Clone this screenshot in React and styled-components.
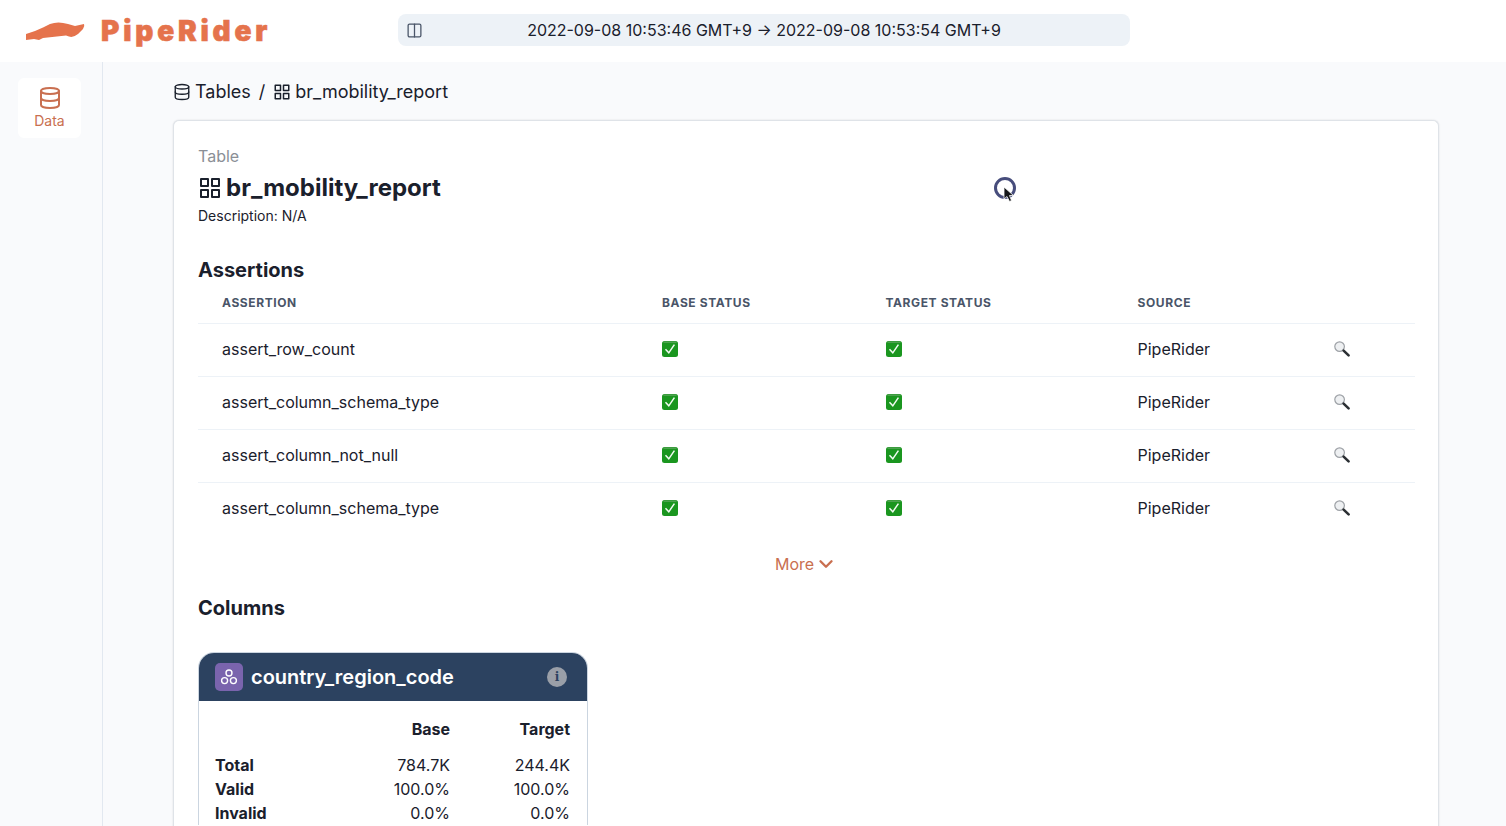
import React from 'react';
import styled, { createGlobalStyle } from 'styled-components';
import { Columns2, Database, ChevronDown } from 'lucide-react';
import { FiGrid } from 'react-icons/fi';

const GlobalStyle = createGlobalStyle`
  html, body {
    margin: 0;
    padding: 0;
    height: 826px;
    overflow: hidden;
    background: #f9fafc;
    font-family: Inter, "Liberation Sans", sans-serif;
    color: #1a202c;
  }
  * { box-sizing: border-box; }
`;

const Page = styled.div`
  height: 826px;
  display: flex;
  flex-direction: column;
  overflow: hidden;
`;

const TopBar = styled.header`
  height: 62px;
  flex: none;
  background: #ffffff;
  display: grid;
  grid-template-columns: 398px 732px;
  align-items: center;
`;

const Brand = styled.div`
  display: flex;
  align-items: center;
  padding-left: 25px;
  gap: 16px;
`;

const BrandName = styled.span`
  font-family: Inter, Lato, sans-serif;
  font-weight: 900;
  font-size: 28px;
  letter-spacing: 3.8px;
  -webkit-text-stroke: 0.6px #e5734c;
  color: #e5734c;
  line-height: 30px;
  margin-top: -1px;
`;

const RangeBar = styled.div`
  position: relative;
  height: 32px;
  margin-top: -2px;
  border-radius: 8px;
  background: #edf2f7;
  display: flex;
  align-items: center;
  justify-content: center;
  font-size: 16px;
  color: #1a202c;
`;

const ToggleIcon = styled.span`
  position: absolute;
  left: 8px;
  top: 8px;
  display: flex;
  color: #4a5568;
`;

const Body = styled.div`
  flex: 1;
  display: flex;
  min-height: 0;
`;

const Sidebar = styled.nav`
  width: 103px;
  flex: none;
  border-right: 1px solid #e2e8f0;
  padding: 16px 0 0 18px;
`;

const NavItem = styled.div`
  width: 63px;
  height: 60px;
  background: #ffffff;
  border-radius: 6px;
  display: flex;
  flex-direction: column;
  align-items: center;
  padding-top: 8px;
  color: #c96f50;
  font-size: 14px;
  line-height: 21px;
`;

const Main = styled.main`
  flex: 1;
  padding: 17px 67px 0 70px;
  min-width: 0;
`;

const Crumbs = styled.div`
  display: flex;
  align-items: center;
  height: 25px;
  font-size: 18px;
  color: #1a202c;
  margin-bottom: 16px;
`;

const CrumbIcon = styled.span`
  display: flex;
  margin-right: 4px;
`;

const CrumbSep = styled.span`
  margin: 0 8px;
`;

const Card = styled.section`
  background: #ffffff;
  border: 1px solid #dfe3e8;
  border-bottom: none;
  border-radius: 6px 6px 0 0;
  box-shadow: 0 0 2px rgba(0, 0, 0, 0.12);
  padding: 23px 24px 0;
  height: 720px;
`;

const Eyebrow = styled.div`
  font-size: 16px;
  line-height: 24px;
  color: #8b8f96;
`;

const TableTitle = styled.h1`
  margin: 4px 0 0;
  display: flex;
  align-items: center;
  gap: 4px;
  font-size: 24px;
  line-height: 32px;
  font-weight: 700;
  color: #1a202c;
`;

const Description = styled.div`
  font-size: 14px;
  line-height: 20px;
  margin-top: 2px;
`;

const SectionTitle = styled.h2`
  margin: ${(p) => p.$top}px 0 0;
  font-size: 20px;
  line-height: 24px;
  font-weight: 700;
  color: #1a202c;
`;

const AssertionTable = styled.table`
  width: 1217px;
  border-collapse: collapse;
  table-layout: fixed;
`;

const HeadCell = styled.th`
  height: 41px;
  padding: 0 0 0 24px;
  text-align: left;
  font-size: 12px;
  font-weight: 700;
  letter-spacing: 0.6px;
  color: #4a5568;
  border-bottom: 1px solid #edf2f7;
`;

const Cell = styled.td`
  height: 53px;
  padding: 0 0 2px 24px;
  font-size: 16px;
  color: #1a202c;
  border-bottom: ${(p) => (p.$last ? 'none' : '1px solid #edf2f7')};
`;

const IconCell = styled.span`
  display: flex;
  align-items: center;
`;

const MoreRow = styled.div`
  display: flex;
  justify-content: center;
  align-items: center;
  height: 24px;
  margin-top: 17px;
  gap: 1px;
  font-size: 16px;
  color: #c96f50;
`;

const ColumnCard = styled.article`
  width: 390px;
  margin-top: 32px;
  border: 1px solid #cbd5e0;
  border-bottom: none;
  border-radius: 16px 16px 0 0;
  overflow: hidden;
`;

const ColumnHeader = styled.div`
  height: 48px;
  background: #2c4260;
  display: flex;
  align-items: center;
  padding: 0 20px 0 16px;
  color: #ffffff;
`;

const TypeBadge = styled.span`
  width: 28px;
  height: 28px;
  border-radius: 5px;
  background: #7a64ad;
  display: flex;
  align-items: center;
  justify-content: center;
  margin-right: 8px;
`;

const ColumnName = styled.span`
  flex: 1;
  font-size: 20px;
  font-weight: 600;
`;

const InfoDot = styled.span`
  width: 20px;
  height: 20px;
  border-radius: 50%;
  background: #9a9fa8;
  color: #2c4260;
  font-family: "DejaVu Serif", serif;
  font-weight: 700;
  font-size: 12px;
  display: flex;
  align-items: center;
  justify-content: center;
`;

const Metrics = styled.div`
  background: #ffffff;
  padding: 16px 17px 0 16px;
  display: grid;
  grid-template-columns: 1fr 120px 120px;
  font-size: 16px;
  line-height: 24px;
`;

const MetricHead = styled.div`
  font-weight: 700;
  text-align: right;
`;

const Spacer = styled.div`
  grid-column: 1 / -1;
  height: 12px;
`;

const MetricLabel = styled.div`
  font-weight: 700;
`;

const MetricValue = styled.div`
  text-align: right;
`;

const CursorSpot = styled.div`
  position: absolute;
  left: 994px;
  top: 177px;
  width: 23px;
  height: 27px;
`;

const assertions = [
  'assert_row_count',
  'assert_column_schema_type',
  'assert_column_not_null',
  'assert_column_schema_type',
];

const metrics = [
  ['Total', '784.7K', '244.4K'],
  ['Valid', '100.0%', '100.0%'],
  ['Invalid', '0.0%', '0.0%'],
];

const CarLogo = () => (
  <svg width="60" height="20" viewBox="0 0 60 20">
    <path
      fill="#e5734c"
      d="M1 13 L10 10 L18 6.5 L25 3 Q33 0 43 3 L50 5 L59 3 Q60 5 58 8 L53 13 Q48 17 44 15.5 L41 14.5 L18 17 L14 19 L9 18 L1 19 Z"
    />
  </svg>
);

const CheckEmoji = () => (
  <svg width="16" height="16" viewBox="0 0 16 16">
    <rect width="16" height="16" rx="2.5" fill="#1a961f" />
    <rect x="1.5" y="0.6" width="13" height="1" fill="#6fa96f" />
    <path d="M3.5 8.2 L6.8 11.8 L12.4 3.6" fill="none" stroke="#f2fbf2" strokeWidth="1.5" />
  </svg>
);

const Magnifier = () => (
  <svg width="18" height="18" viewBox="0 0 18 18">
    <circle cx="6.6" cy="6.6" r="4.8" fill="#eef0f2" stroke="#9da1a6" strokeWidth="1.2" />
    <path d="M10.6 10.6 L15.6 15.4" stroke="#2b2f33" strokeWidth="2.6" strokeLinecap="round" />
  </svg>
);

const GroupIcon = () => (
  <svg width="18" height="18" viewBox="0 0 18 18" fill="none" stroke="#ffffff" strokeWidth="1.4">
    <circle cx="9" cy="5" r="3" />
    <circle cx="4.6" cy="12.6" r="3" />
    <circle cx="13.4" cy="12.6" r="3" />
  </svg>
);

const RecordingCursor = () => (
  <svg width="23" height="27" viewBox="0 0 23 27">
    <circle cx="11" cy="11" r="9.5" fill="none" stroke="#474d7c" strokeWidth="3" />
    <path d="M10 10 L10 22 L13 19.5 L15.5 24.5 L17.5 23.5 L15.5 18.5 L19.5 18.5 Z" fill="#15171a" stroke="#ffffff" strokeWidth="0.8" />
  </svg>
);

export default function App() {
  return (
    <Page>
      <GlobalStyle />
      <TopBar>
        <Brand>
          <CarLogo />
          <BrandName>PipeRider</BrandName>
        </Brand>
        <RangeBar>
          <ToggleIcon>
            <Columns2 size={17} strokeWidth={1.8} />
          </ToggleIcon>
          2022-09-08 10:53:46 GMT+9 → 2022-09-08 10:53:54 GMT+9
        </RangeBar>
      </TopBar>
      <Body>
        <Sidebar>
          <NavItem>
            <Database size={24} strokeWidth={2} />
            Data
          </NavItem>
        </Sidebar>
        <Main>
          <Crumbs>
            <CrumbIcon>
              <Database size={18} strokeWidth={1.8} />
            </CrumbIcon>
            Tables
            <CrumbSep>/</CrumbSep>
            <CrumbIcon>
              <FiGrid size={18} />
            </CrumbIcon>
            br_mobility_report
          </Crumbs>
          <Card>
            <Eyebrow>Table</Eyebrow>
            <TableTitle>
              <FiGrid size={24} strokeWidth={2} />
              br_mobility_report
            </TableTitle>
            <Description>Description: N/A</Description>
            <SectionTitle $top={32}>Assertions</SectionTitle>
            <AssertionTable>
              <colgroup>
                <col width="440" />
                <col width="223.5" />
                <col width="252" />
                <col width="195.5" />
                <col />
              </colgroup>
              <thead>
                <tr>
                  <HeadCell>ASSERTION</HeadCell>
                  <HeadCell>BASE STATUS</HeadCell>
                  <HeadCell>TARGET STATUS</HeadCell>
                  <HeadCell>SOURCE</HeadCell>
                  <HeadCell />
                </tr>
              </thead>
              <tbody>
                {assertions.map((name, i) => (
                  <tr key={i}>
                    <Cell $last={i === assertions.length - 1}>{name}</Cell>
                    <Cell $last={i === assertions.length - 1}>
                      <IconCell><CheckEmoji /></IconCell>
                    </Cell>
                    <Cell $last={i === assertions.length - 1}>
                      <IconCell><CheckEmoji /></IconCell>
                    </Cell>
                    <Cell $last={i === assertions.length - 1}>PipeRider</Cell>
                    <Cell $last={i === assertions.length - 1}>
                      <IconCell><Magnifier /></IconCell>
                    </Cell>
                  </tr>
                ))}
              </tbody>
            </AssertionTable>
            <MoreRow>
              More
              <ChevronDown size={22} strokeWidth={2.6} />
            </MoreRow>
            <SectionTitle $top={20}>Columns</SectionTitle>
            <ColumnCard>
              <ColumnHeader>
                <TypeBadge><GroupIcon /></TypeBadge>
                <ColumnName>country_region_code</ColumnName>
                <InfoDot>i</InfoDot>
              </ColumnHeader>
              <Metrics>
                <div />
                <MetricHead>Base</MetricHead>
                <MetricHead>Target</MetricHead>
                <Spacer />
                {metrics.map(([label, base, target]) => (
                  <React.Fragment key={label}>
                    <MetricLabel>{label}</MetricLabel>
                    <MetricValue>{base}</MetricValue>
                    <MetricValue>{target}</MetricValue>
                  </React.Fragment>
                ))}
              </Metrics>
            </ColumnCard>
          </Card>
        </Main>
      </Body>
      <CursorSpot>
        <RecordingCursor />
      </CursorSpot>
    </Page>
  );
}
